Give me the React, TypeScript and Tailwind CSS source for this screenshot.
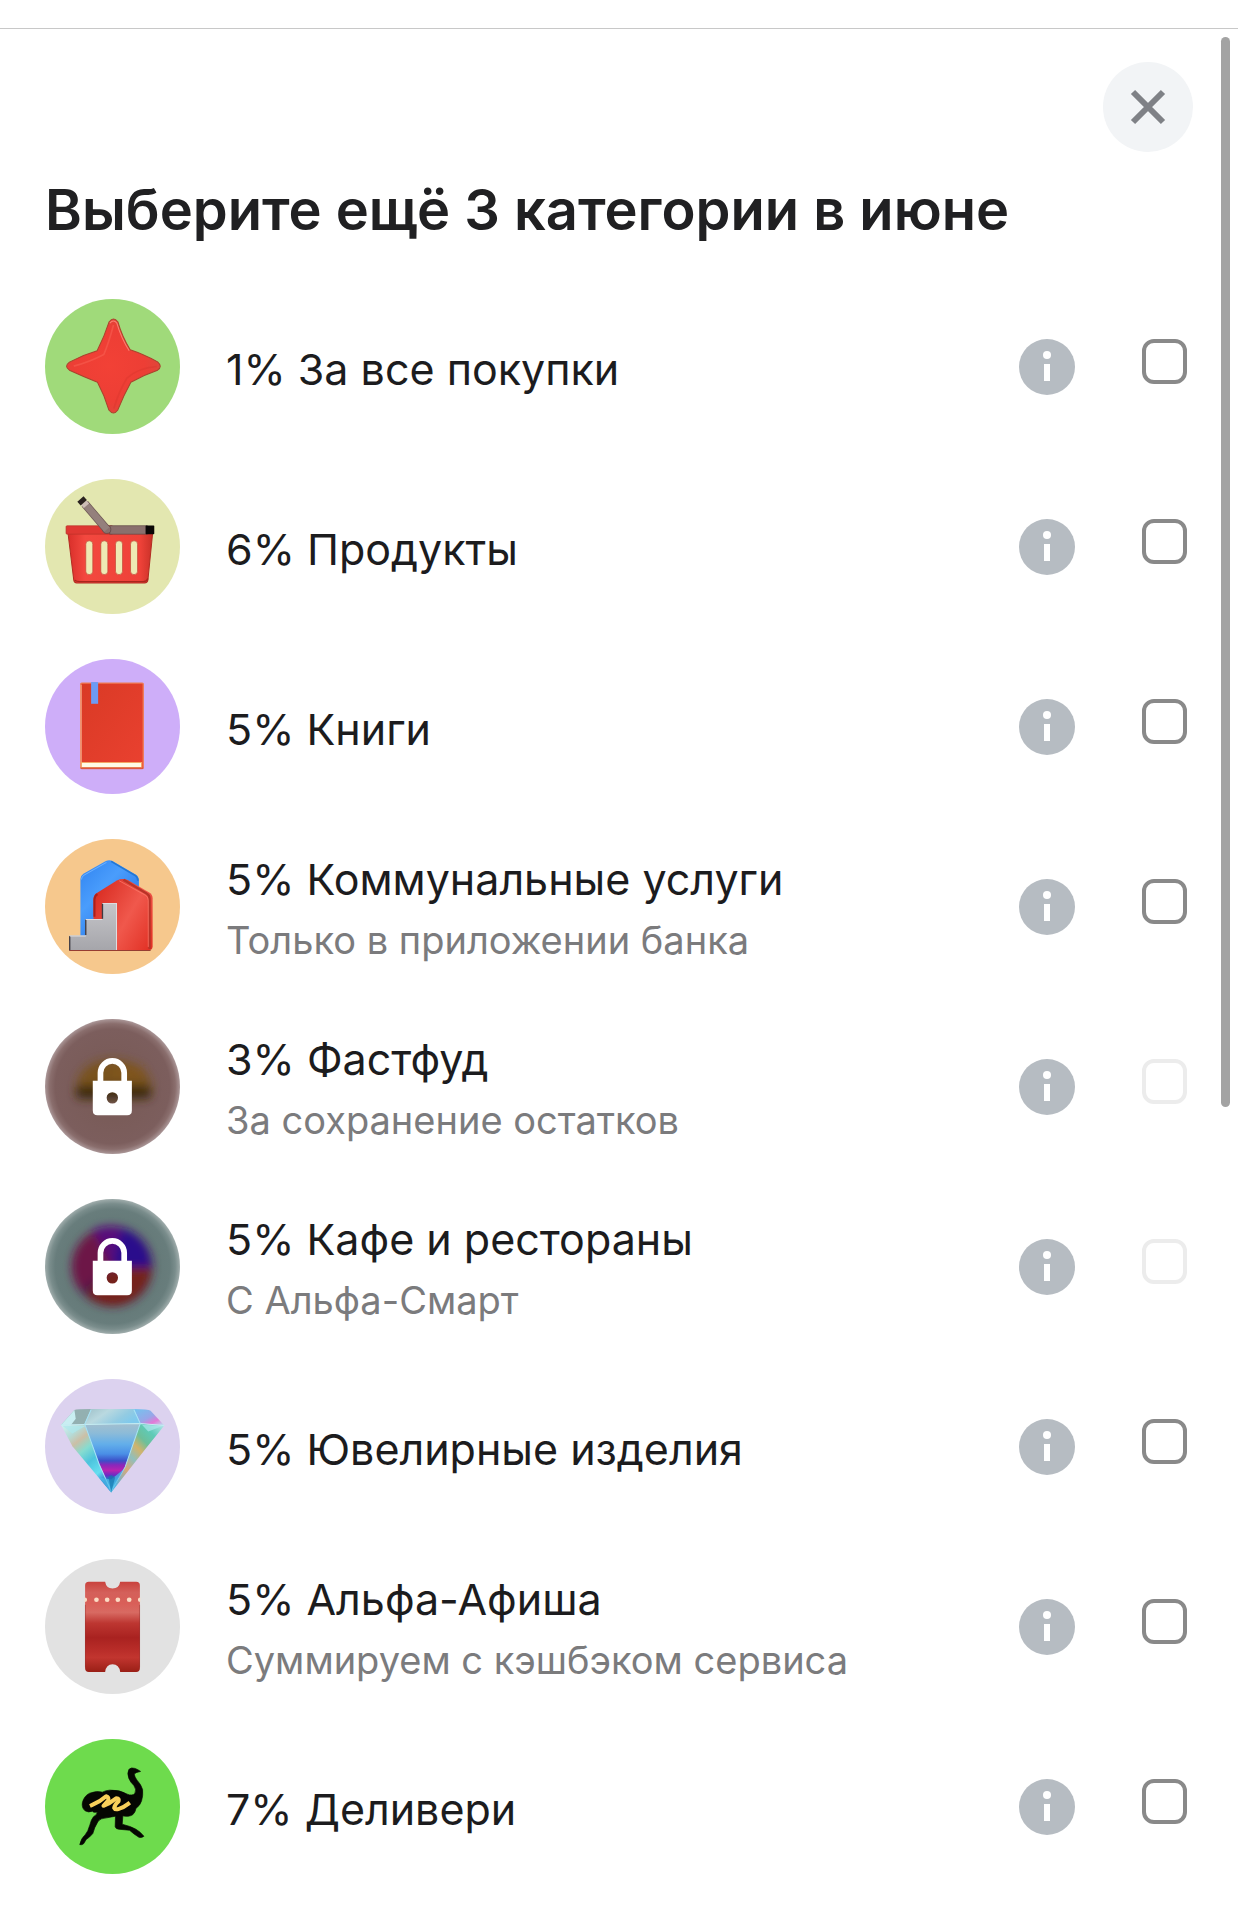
import { useState } from "react";
import type { ReactNode } from "react";

type Category = {
  id: string;
  title: string;
  note?: string;
  locked?: boolean;
  icon: ReactNode;
};

function StarIcon() {
  return (
    <svg viewBox="46 56 404 404" className="h-full w-full" aria-hidden="true">
      <defs>
        <radialGradient id="star-fill" cx="0.45" cy="0.5" r="0.55">
          <stop offset="0" stopColor="#f24136" />
          <stop offset="0.7" stopColor="#ed3e35" />
          <stop offset="1" stopColor="#e0453a" />
        </radialGradient>
      </defs>
      <circle cx="248" cy="258" r="202" fill="#a0da7a" />
      <path
        d="M238 124Q251 108 264 124Q277 170 301 208Q340 221 383 244Q399 258 383 269Q342 283 303 305Q281 345 264 388Q251 406 237 388Q225 346 203 305Q163 289 119 269Q102 258 119 245Q158 224 202 211Q224 168 238 124Z"
        fill="url(#star-fill)"
        stroke="#a9432c"
        strokeWidth="3"
      />
      <path d="M240 128Q251 116 261 128Q274 173 298 211" fill="none" stroke="#f98272" strokeWidth="3" />
      <path d="M251 134Q236 190 222 222Q180 244 132 257" fill="none" stroke="#fa6455" strokeWidth="5" opacity="0.5" />
      <path d="M380 258Q325 262 291 293Q268 330 252 384" fill="none" stroke="#d5352b" strokeWidth="5" opacity="0.35" />
    </svg>
  );
}

function BasketIcon() {
  return (
    <svg viewBox="46 597 404 404" className="h-full w-full" aria-hidden="true">
      <defs>
        <linearGradient id="basket-fill" x1="0" x2="1">
          <stop offset="0" stopColor="#d92f2a" />
          <stop offset="0.2" stopColor="#f3483f" />
          <stop offset="0.85" stopColor="#ef4239" />
          <stop offset="1" stopColor="#c93128" />
        </linearGradient>
      </defs>
      <circle cx="248" cy="799" r="202" fill="#e3e7b0" />
      <path d="M115 760H368L354 899Q353 908 344 908H141Q133 908 132 899Z" fill="url(#basket-fill)" stroke="#b32c22" strokeWidth="3" />
      <path d="M135 900Q140 904 150 904H340Q351 904 354 895" fill="none" stroke="#a9261d" strokeWidth="4" />
      <rect x="109" y="737" width="140" height="25" rx="3" fill="#df3832" stroke="#b93028" strokeWidth="2" />
      <rect x="240" y="737" width="112" height="25" fill="#8a706d" stroke="#5b4442" strokeWidth="2" />
      <rect x="347" y="736" width="26" height="26" rx="2" fill="#0b0706" />
      <path d="M165 671L231 748" stroke="#6b5552" strokeWidth="25" />
      <circle cx="231" cy="748" r="12" fill="#8a706d" stroke="#5b4442" strokeWidth="2" />
      <path d="M165 671L231 748" stroke="#94807c" strokeWidth="21" />
      <path d="M162 668L170 677" stroke="#cdbdb6" strokeWidth="21" />
      <path d="M152 657L162 668" stroke="#2b2320" strokeWidth="25" />
      <g fill="#eeeab4" stroke="#c04735" strokeWidth="2">
        <rect x="168" y="782" width="21" height="101" rx="10" />
        <rect x="213" y="782" width="21" height="101" rx="10" />
        <rect x="257" y="782" width="21" height="101" rx="10" />
        <rect x="302" y="782" width="21" height="101" rx="10" />
      </g>
    </svg>
  );
}

function BookIcon() {
  return (
    <svg viewBox="46 57 404 404" className="h-full w-full" aria-hidden="true">
      <defs>
        <linearGradient id="book-fill" x1="0" y1="0" x2="1" y2="1">
          <stop offset="0" stopColor="#d93a25" />
          <stop offset="1" stopColor="#ea4130" />
        </linearGradient>
      </defs>
      <circle cx="248" cy="259" r="202" fill="#ceaef9" />
      <rect x="153" y="129" width="187" height="256" rx="3" fill="url(#book-fill)" stroke="#ef7b55" strokeWidth="4" />
      <path d="M154 134V380" stroke="#f7b08d" strokeWidth="3" />
      <path d="M155 367H335V382H155Z" fill="#fffbe6" stroke="#f4a765" strokeWidth="3" />
      <path d="M153 384H340" stroke="#dc5643" strokeWidth="4" />
      <rect x="184" y="126" width="21" height="65" fill="#6d9bf3" />
    </svg>
  );
}

function HouseIcon() {
  return (
    <svg viewBox="46 597 404 404" className="h-full w-full" aria-hidden="true">
      <defs>
        <linearGradient id="house-back" x1="0" y1="0" x2="0.8" y2="1">
          <stop offset="0" stopColor="#2f83f0" />
          <stop offset="0.4" stopColor="#4a9dfc" />
          <stop offset="1" stopColor="#1e6be0" />
        </linearGradient>
        <linearGradient id="house-front" x1="0" y1="0.2" x2="1" y2="0.9">
          <stop offset="0" stopColor="#d92c22" />
          <stop offset="0.55" stopColor="#f0584c" />
          <stop offset="1" stopColor="#e23226" />
        </linearGradient>
        <linearGradient id="house-steps" x1="0" y1="0" x2="0" y2="1">
          <stop offset="0" stopColor="#c6c6ca" />
          <stop offset="1" stopColor="#a5a5aa" />
        </linearGradient>
      </defs>
      <circle cx="248" cy="799" r="202" fill="#f6c88d" />
      <path d="M152 900V717Q152 707 161 701L228 663Q238 658 248 663L318 704Q327 710 327 721V900Z" fill="url(#house-back)" />
      <path d="M244 664L316 706Q324 712 324 722" fill="none" stroke="#2477d3" strokeWidth="5" />
      <path d="M155 718Q156 709 163 705L230 667" fill="none" stroke="#6eb2ff" strokeWidth="3" />
      <path d="M191 930V776Q191 765 200 759L261 721Q278 713 294 720L358 757Q368 763 368 774V918Q368 930 356 930Z" fill="url(#house-front)" />
      <path d="M281 719L350 760Q359 765 359 776V926" fill="none" stroke="#b93327" strokeWidth="7" />
      <path d="M268 722L346 765Q355 770 355 780V920" fill="none" stroke="#ff8170" strokeWidth="2" />
      <path d="M194 830V778Q195 767 203 762" fill="none" stroke="#ab201b" strokeWidth="6" />
      <path d="M119 932V886H167V837H218V789H260V932Z" fill="url(#house-steps)" />
      <path d="M120 931V887M168 884V838M218 836V790" stroke="#3e3a42" strokeWidth="4" />
      <path d="M120 887H168M168 838H218M218 790H260V930" fill="none" stroke="#dedde1" strokeWidth="3" />
      <path d="M119 931H362" stroke="#963d32" strokeWidth="3" />
    </svg>
  );
}

function Lock() {
  return (
    <g>
      <path d="M212 245V218A35.500 35.500 0 0 1 283 218V245" fill="none" stroke="#fff" strokeWidth="17" />
      <path
        fillRule="evenodd"
        d="M189 242H306V331Q306 345 292 345H203Q189 345 189 331ZM247.500 276A17 17 0 1 0 247.500 310A17 17 0 1 0 247.500 276Z"
        fill="#fff"
      />
    </g>
  );
}

function LockedBurgerIcon() {
  return (
    <svg viewBox="46 57 404 404" className="h-full w-full" aria-hidden="true">
      <defs>
        <radialGradient id="burger-bg">
          <stop offset="0" stopColor="#775954" />
          <stop offset="0.85" stopColor="#7c5e5d" />
          <stop offset="0.93" stopColor="#8a6e6d" />
          <stop offset="1" stopColor="#ab9798" />
        </radialGradient>
        <filter id="burger-blur" x="-50%" y="-50%" width="200%" height="200%">
          <feGaussianBlur stdDeviation="14" />
        </filter>
      </defs>
      <circle cx="248" cy="259" r="202" fill="url(#burger-bg)" />
      <g filter="url(#burger-blur)">
        <path d="M140 262Q150 182 250 178Q350 182 366 262Z" fill="#79531f" />
        <rect x="138" y="256" width="226" height="40" rx="16" fill="#3d2a0e" />
        <rect x="250" y="200" width="90" height="35" fill="#80551a" />
      </g>
      <Lock />
    </svg>
  );
}

function LockedCafeIcon() {
  return (
    <svg viewBox="46 57 404 404" className="h-full w-full" aria-hidden="true">
      <defs>
        <radialGradient id="cafe-bg">
          <stop offset="0" stopColor="#5b6d6c" />
          <stop offset="0.85" stopColor="#687d7c" />
          <stop offset="0.93" stopColor="#7a8d8c" />
          <stop offset="1" stopColor="#a0adac" />
        </radialGradient>
        <filter id="cafe-blur" x="-50%" y="-50%" width="200%" height="200%">
          <feGaussianBlur stdDeviation="13" />
        </filter>
      </defs>
      <circle cx="248" cy="259" r="202" fill="url(#cafe-bg)" />
      <g filter="url(#cafe-blur)">
        <circle cx="248" cy="259" r="120" fill="#4d1a49" />
        <path d="M248 258L150 330A116 116 0 0 1 200 152Z" fill="#6d1247" />
        <path d="M248 258L190 150A120 120 0 0 1 280 144Z" fill="#58097a" />
        <path d="M248 262L275 145A116 116 0 0 1 362 262Z" fill="#2b0b8c" />
        <path d="M240 262H364A116 116 0 0 1 170 345Z" fill="#74201c" />
      </g>
      <Lock />
    </svg>
  );
}

function DiamondIcon() {
  return (
    <svg viewBox="46 57 404 404" className="h-full w-full" aria-hidden="true">
      <defs>
        <linearGradient id="gem-center" x1="0" y1="0" x2="0" y2="1">
          <stop offset="0" stopColor="#a3bfcf" />
          <stop offset="0.14" stopColor="#8cbbd8" />
          <stop offset="0.3" stopColor="#62aeea" />
          <stop offset="0.44" stopColor="#4a8fe6" />
          <stop offset="0.54" stopColor="#3c4fc8" />
          <stop offset="0.6" stopColor="#8a27bb" />
          <stop offset="0.68" stopColor="#b823b0" />
          <stop offset="0.75" stopColor="#6a2cc4" />
          <stop offset="0.8" stopColor="#2a6cc8" />
          <stop offset="0.9" stopColor="#2fa9dd" />
          <stop offset="1" stopColor="#5fd3ee" />
        </linearGradient>
        <linearGradient id="gem-left" x1="0" y1="0" x2="0.6" y2="1">
          <stop offset="0" stopColor="#d5f3f4" />
          <stop offset="0.2" stopColor="#b5dcd8" />
          <stop offset="0.33" stopColor="#ccbfa6" />
          <stop offset="0.48" stopColor="#86dcd0" />
          <stop offset="0.65" stopColor="#4cc4dd" />
          <stop offset="0.85" stopColor="#67dff0" />
          <stop offset="1" stopColor="#2b7fd0" />
        </linearGradient>
        <linearGradient id="gem-right" x1="1" y1="0" x2="0.2" y2="1">
          <stop offset="0" stopColor="#bfe8ee" />
          <stop offset="0.2" stopColor="#5ecbb8" />
          <stop offset="0.34" stopColor="#6dbf9a" />
          <stop offset="0.46" stopColor="#d2b36c" />
          <stop offset="0.6" stopColor="#8fbfbd" />
          <stop offset="0.75" stopColor="#dba978" />
          <stop offset="1" stopColor="#4fb5e6" />
        </linearGradient>
        <linearGradient id="gem-top" x1="0" y1="0" x2="1" y2="0.4">
          <stop offset="0" stopColor="#9dbfc7" />
          <stop offset="0.4" stopColor="#bad9e0" />
          <stop offset="0.75" stopColor="#93cbe2" />
          <stop offset="1" stopColor="#7fc9ec" />
        </linearGradient>
        <linearGradient id="gem-edge" x1="0" y1="0" x2="1" y2="1">
          <stop offset="0" stopColor="#72c5ef" />
          <stop offset="0.5" stopColor="#98a6e8" />
          <stop offset="0.72" stopColor="#e27ad6" />
          <stop offset="1" stopColor="#b6ecf4" />
        </linearGradient>
      </defs>
      <circle cx="248" cy="259" r="202" fill="#dcd2ef" />
      <path d="M94 194L164 193L244 397L128 258Z" fill="url(#gem-left)" />
      <path d="M403 196L330 190L244 397L350 262Z" fill="url(#gem-right)" />
      <path d="M164 193L330 190L286 320L244 397L208 310Z" fill="url(#gem-center)" />
      <path d="M134 150Q140 147 184 147L164 193L94 195Z" fill="#93b0b1" />
      <path d="M134 150L94 195L122 197L138 176Z" fill="#c9eef2" />
      <path d="M184 147H312L332 190L164 194Z" fill="url(#gem-top)" />
      <path d="M312 147Q355 148 362 152L403 196L332 191Z" fill="url(#gem-edge)" />
      <path d="M94 195L164 193L332 190L403 196" fill="none" stroke="#c4ecf2" strokeWidth="3" />
      <path d="M184 149L165 192L208 312L244 392M312 149L331 190L286 320L244 392" fill="none" stroke="#a7e3f4" strokeWidth="3" />
      <path d="M99 198L128 220L166 198M336 194L355 214L398 198" fill="#aee8ec" opacity="0.7" />
      <path d="M208 352L244 358L282 326L244 397Z" fill="#4bb9e5" opacity="0.75" />
      <path d="M244 397L236 350L244 344L256 352Z" fill="#1676ae" opacity="0.7" />
    </svg>
  );
}

function TicketIcon() {
  return (
    <svg viewBox="46 598 404 404" className="h-full w-full" aria-hidden="true">
      <defs>
        <linearGradient id="ticket-fill" x1="0" y1="0" x2="0" y2="1">
          <stop offset="0" stopColor="#c9423d" />
          <stop offset="0.12" stopColor="#d4605a" />
          <stop offset="0.24" stopColor="#d95f58" />
          <stop offset="0.34" stopColor="#d86a62" />
          <stop offset="0.46" stopColor="#bd3631" />
          <stop offset="0.62" stopColor="#a92220" />
          <stop offset="0.76" stopColor="#b92d29" />
          <stop offset="0.84" stopColor="#c2352f" />
          <stop offset="1" stopColor="#9a1f16" />
        </linearGradient>
      </defs>
      <circle cx="248" cy="800" r="202" fill="#e2e2e2" />
      <path
        d="M177 666H226Q229 686 248 686Q268 686 271 666H319Q330 666 330 677V925Q330 936 319 936H271Q268 913 248 913Q229 913 226 936H177Q166 936 166 925V677Q166 666 177 666Z"
        fill="url(#ticket-fill)"
      />
      <path d="M167 735V922M329 735V922" stroke="#8c1d18" strokeWidth="2" opacity="0.6" />
      <g fill="#fbdcc4">
        <circle cx="200" cy="720" r="7" />
        <circle cx="232" cy="720" r="7" />
        <circle cx="264" cy="720" r="7" />
        <circle cx="298" cy="720" r="7" />
        <path d="M165 713A7 7 0 0 1 165 727ZM331 713A7 7 0 0 0 331 727Z" />
      </g>
    </svg>
  );
}

function OstrichIcon() {
  return (
    <svg viewBox="46 60 404 404" className="h-full w-full" aria-hidden="true">
      <circle cx="248" cy="262" r="202" fill="#6edb4d" />
      <path
        d="M332 157Q322 150 315 148Q304 144 297 151Q291 163 297 178Q302 190 312 199Q321 211 315 223Q307 231 292 225Q268 211 240 213Q226 214 218 219Q200 214 180 222Q163 230 158 250Q155 266 166 275Q176 281 188 276Q190 281 203 279Q202 286 191 293Q184 301 180 318Q175 337 166 347Q154 357 150 376Q156 378 162 373L169 361Q180 354 189 343Q193 326 205 306Q212 297 230 296Q246 293 257 291L256 322Q258 330 267 330L299 333Q312 345 327 354Q335 357 342 351Q332 338 318 330Q302 321 277 315L279 290Q292 293 301 290Q315 286 318 268Q331 259 335 245Q340 228 338 211Q333 195 322 184Q314 174 313 165Q316 160 332 157Z"
        fill="#050602"
        stroke="#050602"
        strokeWidth="2"
        strokeLinejoin="round"
      />
      <path
        d="M186 258Q211 247 229 231Q238 233 235 244L221 260Q240 253 260 237Q269 237 266 247Q254 256 253 266Q256 273 267 269Q281 265 295 254"
        fill="none"
        stroke="#f9d05a"
        strokeWidth="12"
        strokeLinecap="square"
        strokeLinejoin="round"
      />
    </svg>
  );
}

const categories: Category[] = [
  { id: "all", title: "1% За все покупки", icon: <StarIcon /> },
  { id: "grocery", title: "6% Продукты", icon: <BasketIcon /> },
  { id: "books", title: "5% Книги", icon: <BookIcon /> },
  { id: "utilities", title: "5% Коммунальные услуги", note: "Только в приложении банка", icon: <HouseIcon /> },
  { id: "fastfood", title: "3% Фастфуд", note: "За сохранение остатков", locked: true, icon: <LockedBurgerIcon /> },
  { id: "cafe", title: "5% Кафе и рестораны", note: "С Альфа-Смарт", locked: true, icon: <LockedCafeIcon /> },
  { id: "jewelry", title: "5% Ювелирные изделия", icon: <DiamondIcon /> },
  { id: "afisha", title: "5% Альфа-Афиша", note: "Суммируем с кэшбэком сервиса", icon: <TicketIcon /> },
  { id: "delivery", title: "7% Деливери", icon: <OstrichIcon /> },
];

function CategoryRow({ category, checked, onToggle }: { category: Category; checked: boolean; onToggle: () => void }) {
  return (
    <li className="flex min-h-[135px] items-center">
      <div className="h-[135px] w-[135px] shrink-0">{category.icon}</div>
      <label htmlFor={category.id} className="ml-[46px] min-w-0 flex-1 pt-1">
        <span className="block text-[43px] leading-[62px] text-[#1c1c1e]">{category.title}</span>
        {category.note && <span className="block text-[38px] leading-[60px] text-[#7b7b7d]">{category.note}</span>}
      </label>
      <button type="button" aria-label="Подробнее" className="mr-[67px] h-14 w-14 shrink-0">
        <svg viewBox="0 0 56 56" className="h-full w-full" aria-hidden="true">
          <circle cx="28" cy="28" r="28" fill="#b6bcc2" />
          <circle cx="28" cy="16" r="4" fill="#fff" />
          <path d="M25 25H31V42H25Z" fill="#fff" />
        </svg>
      </button>
      <input
        id={category.id}
        type="checkbox"
        checked={checked}
        disabled={category.locked}
        onChange={onToggle}
        className="mt-10 h-[45px] w-[45px] shrink-0 appearance-none self-start rounded-xl border-4 border-[#898989] bg-white checked:bg-[#898989] disabled:border-[#ececec]"
      />
    </li>
  );
}

export default function App() {
  const [selected, setSelected] = useState<string[]>([]);

  const toggle = (id: string) => {
    setSelected((prev) => (prev.includes(id) ? prev.filter((item) => item !== id) : [...prev, id]));
  };

  return (
    <div className="min-h-screen bg-white pt-7 font-['Inter','Noto_Sans',sans-serif]">
      <main className="relative border-t border-[#c8c8c8] pb-11">
        <div className="absolute right-2 top-2 h-[1070px] w-[9px] rounded-full bg-[#a3a3a3]" />

        <div className="flex justify-end pr-[45px] pt-[33px]">
          <button type="button" aria-label="Закрыть" className="flex h-[90px] w-[90px] items-center justify-center rounded-full bg-[#f2f4f6]">
            <svg viewBox="0 0 36 36" className="h-9 w-9" aria-hidden="true">
              <path d="M3 3L33 33M33 3L3 33" stroke="#7f8186" strokeWidth="6" />
            </svg>
          </button>
        </div>

        <h1 className="mt-6 px-[45px] text-[56px] font-semibold leading-[68px] text-[#202022]">Выберите ещё 3 категории в июне</h1>

        <ul className="mt-[55px] flex flex-col gap-[45px] pl-[45px] pr-[51px]">
          {categories.map((category) => (
            <CategoryRow
              key={category.id}
              category={category}
              checked={selected.includes(category.id)}
              onToggle={() => toggle(category.id)}
            />
          ))}
        </ul>
      </main>
    </div>
  );
}
